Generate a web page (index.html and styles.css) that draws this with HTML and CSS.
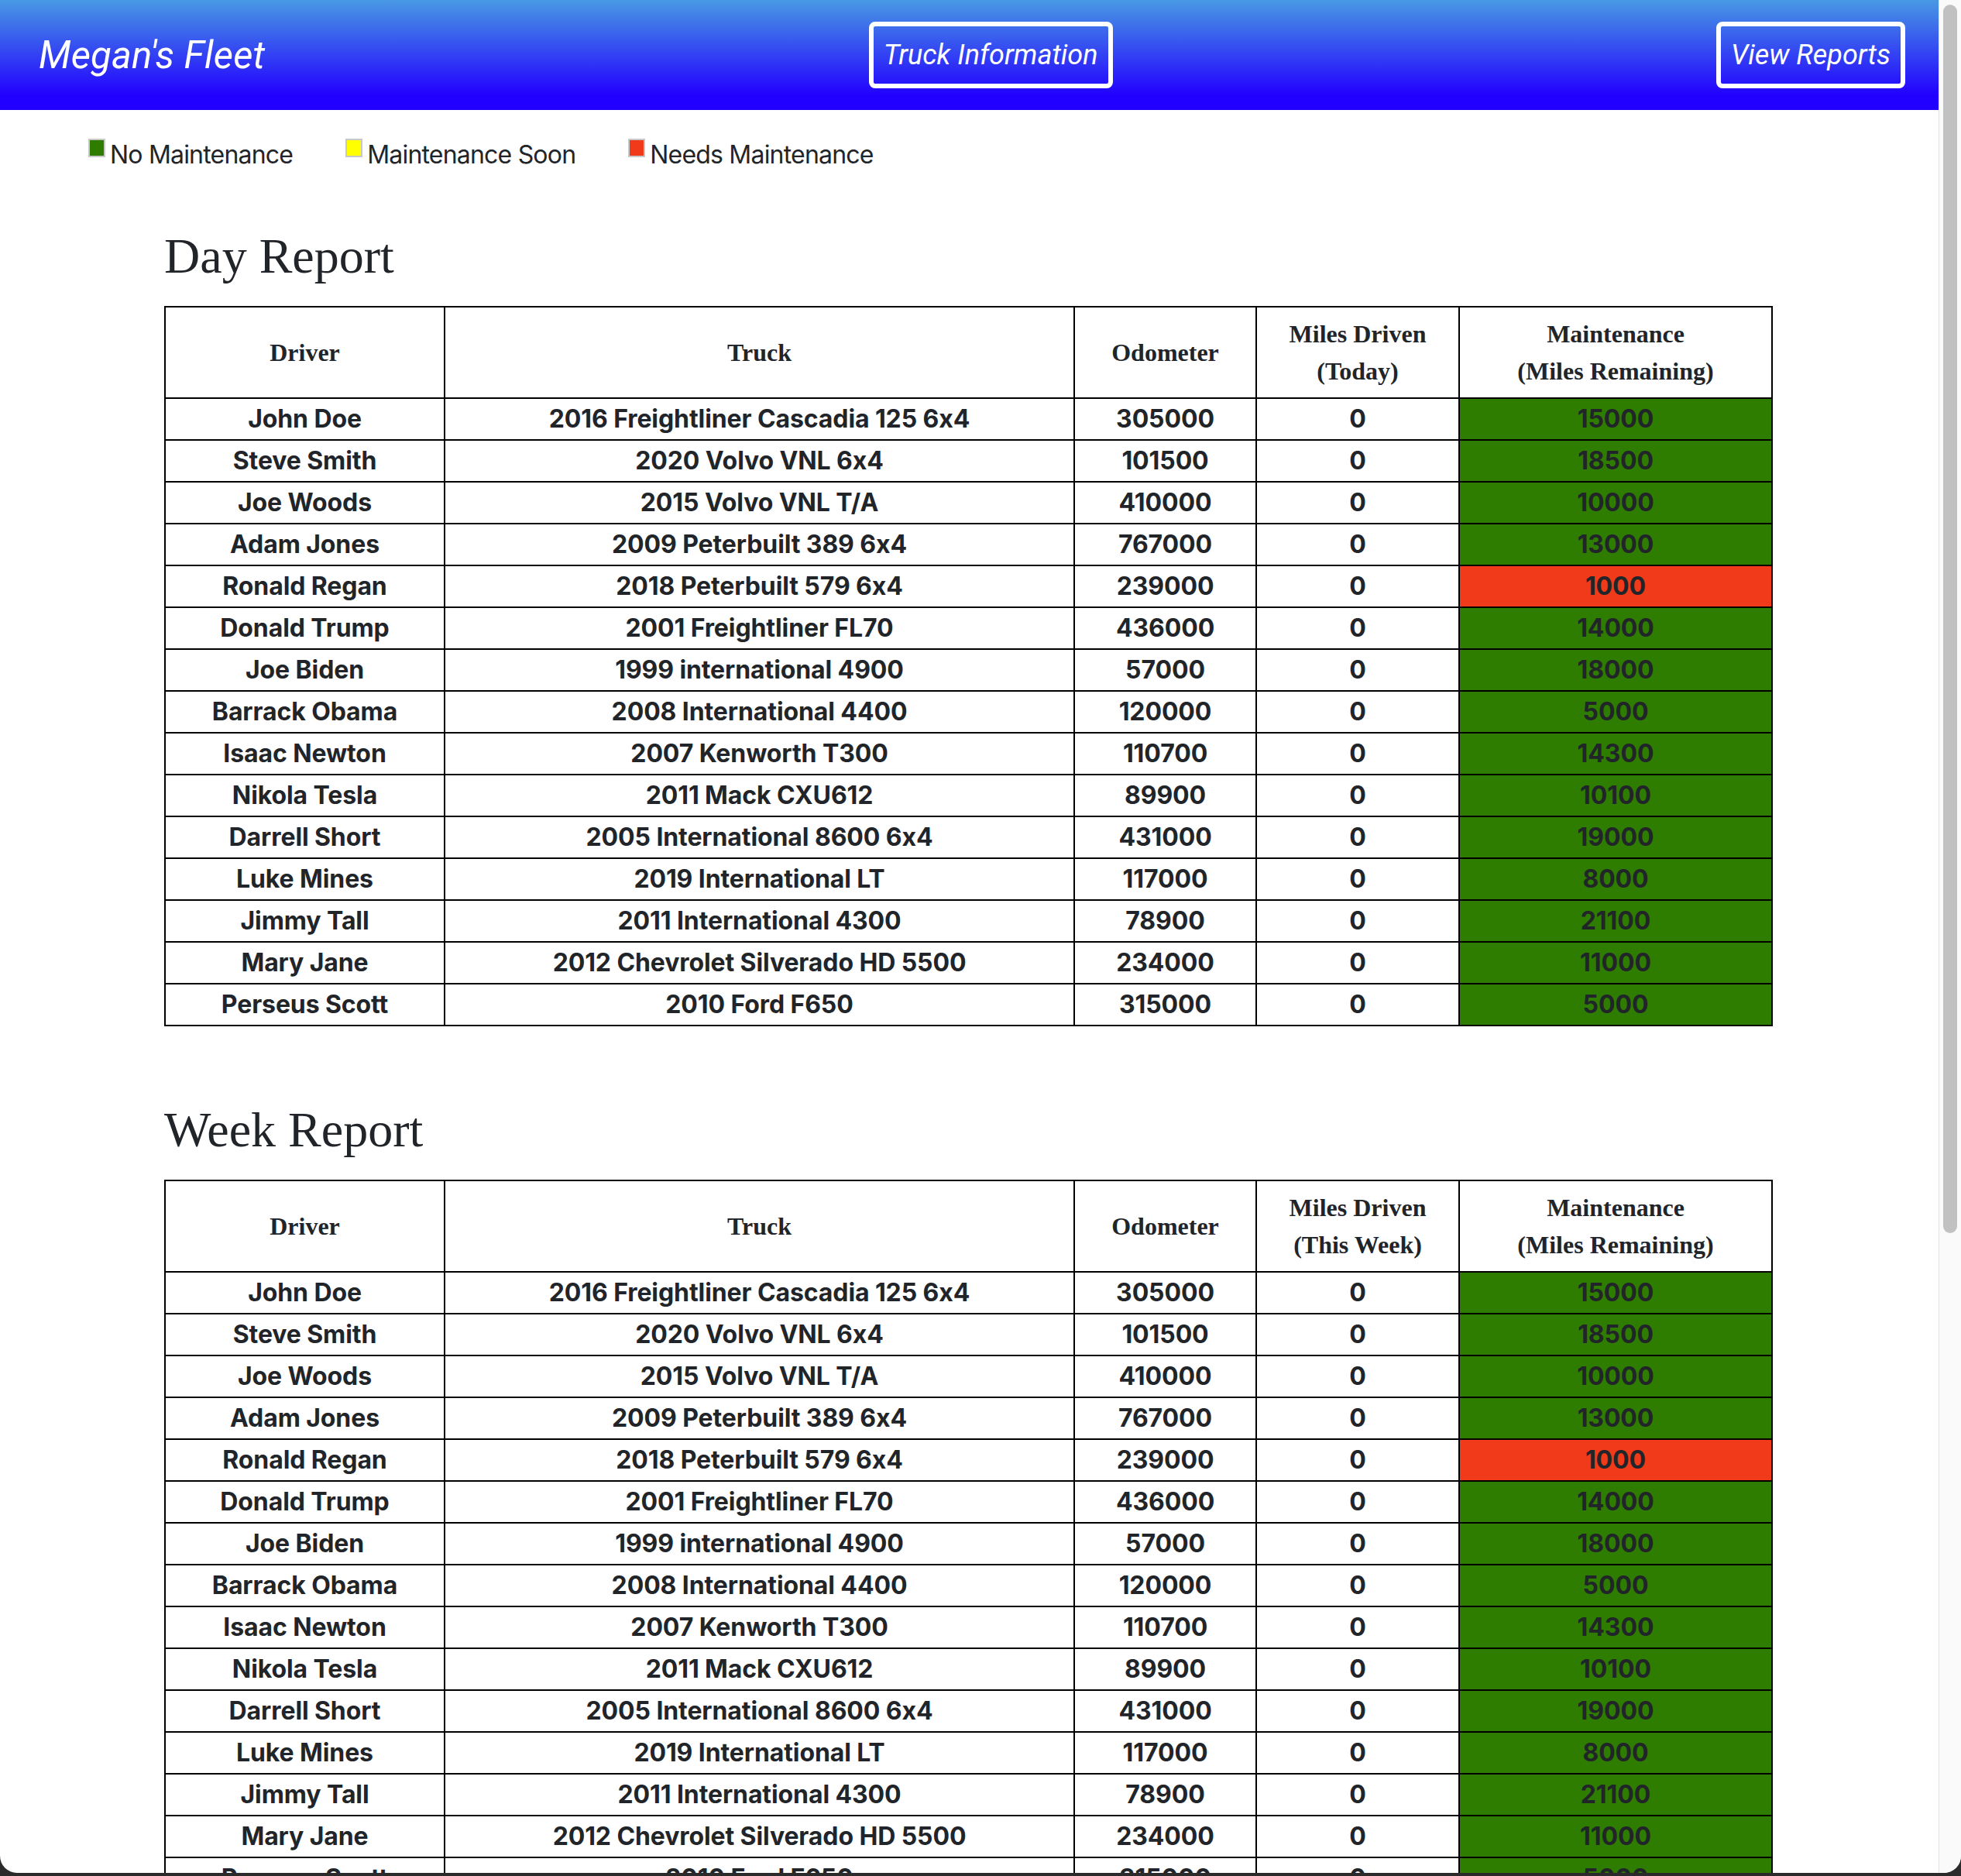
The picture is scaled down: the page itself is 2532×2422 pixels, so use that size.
FILE: index.html
```html
<!DOCTYPE html>
<html lang="en">
<head>
<meta charset="utf-8">
<title>Megan's Fleet</title>
<link rel="stylesheet" href="styles.css">
</head>
<body>
<div class="window">
  <div class="page">
    <nav class="navbar">
      <div class="brand">Megan's Fleet</div>
      <a class="navbtn">Truck Information</a>
      <a class="navbtn">View Reports</a>
    </nav>

    <div class="legend">
      <div class="legend-item"><span class="swatch sw-green"></span>No Maintenance</div>
      <div class="legend-item"><span class="swatch sw-yellow"></span>Maintenance Soon</div>
      <div class="legend-item"><span class="swatch sw-red"></span>Needs Maintenance</div>
    </div>

    <section class="report">
      <h2>Day Report</h2>
      <table>
        <colgroup>
          <col class="c-driver"><col class="c-truck"><col class="c-odo"><col class="c-miles"><col class="c-maint">
        </colgroup>
        <thead>
          <tr><th>Driver</th><th>Truck</th><th>Odometer</th><th>Miles Driven<br>(Today)</th><th>Maintenance<br>(Miles Remaining)</th></tr>
        </thead>
        <tbody>
          <tr><td>John Doe</td><td>2016 Freightliner Cascadia 125 6x4</td><td>305000</td><td>0</td><td class="ok">15000</td></tr>
          <tr><td>Steve Smith</td><td>2020 Volvo VNL 6x4</td><td>101500</td><td>0</td><td class="ok">18500</td></tr>
          <tr><td>Joe Woods</td><td>2015 Volvo VNL T/A</td><td>410000</td><td>0</td><td class="ok">10000</td></tr>
          <tr><td>Adam Jones</td><td>2009 Peterbuilt 389 6x4</td><td>767000</td><td>0</td><td class="ok">13000</td></tr>
          <tr><td>Ronald Regan</td><td>2018 Peterbuilt 579 6x4</td><td>239000</td><td>0</td><td class="bad">1000</td></tr>
          <tr><td>Donald Trump</td><td>2001 Freightliner FL70</td><td>436000</td><td>0</td><td class="ok">14000</td></tr>
          <tr><td>Joe Biden</td><td>1999 international 4900</td><td>57000</td><td>0</td><td class="ok">18000</td></tr>
          <tr><td>Barrack Obama</td><td>2008 International 4400</td><td>120000</td><td>0</td><td class="ok">5000</td></tr>
          <tr><td>Isaac Newton</td><td>2007 Kenworth T300</td><td>110700</td><td>0</td><td class="ok">14300</td></tr>
          <tr><td>Nikola Tesla</td><td>2011 Mack CXU612</td><td>89900</td><td>0</td><td class="ok">10100</td></tr>
          <tr><td>Darrell Short</td><td>2005 International 8600 6x4</td><td>431000</td><td>0</td><td class="ok">19000</td></tr>
          <tr><td>Luke Mines</td><td>2019 International LT</td><td>117000</td><td>0</td><td class="ok">8000</td></tr>
          <tr><td>Jimmy Tall</td><td>2011 International 4300</td><td>78900</td><td>0</td><td class="ok">21100</td></tr>
          <tr><td>Mary Jane</td><td>2012 Chevrolet Silverado HD 5500</td><td>234000</td><td>0</td><td class="ok">11000</td></tr>
          <tr><td>Perseus Scott</td><td>2010 Ford F650</td><td>315000</td><td>0</td><td class="ok">5000</td></tr>
        </tbody>
      </table>
    </section>

    <section class="report">
      <h2>Week Report</h2>
      <table>
        <colgroup>
          <col class="c-driver"><col class="c-truck"><col class="c-odo"><col class="c-miles"><col class="c-maint">
        </colgroup>
        <thead>
          <tr><th>Driver</th><th>Truck</th><th>Odometer</th><th>Miles Driven<br>(This Week)</th><th>Maintenance<br>(Miles Remaining)</th></tr>
        </thead>
        <tbody>
          <tr><td>John Doe</td><td>2016 Freightliner Cascadia 125 6x4</td><td>305000</td><td>0</td><td class="ok">15000</td></tr>
          <tr><td>Steve Smith</td><td>2020 Volvo VNL 6x4</td><td>101500</td><td>0</td><td class="ok">18500</td></tr>
          <tr><td>Joe Woods</td><td>2015 Volvo VNL T/A</td><td>410000</td><td>0</td><td class="ok">10000</td></tr>
          <tr><td>Adam Jones</td><td>2009 Peterbuilt 389 6x4</td><td>767000</td><td>0</td><td class="ok">13000</td></tr>
          <tr><td>Ronald Regan</td><td>2018 Peterbuilt 579 6x4</td><td>239000</td><td>0</td><td class="bad">1000</td></tr>
          <tr><td>Donald Trump</td><td>2001 Freightliner FL70</td><td>436000</td><td>0</td><td class="ok">14000</td></tr>
          <tr><td>Joe Biden</td><td>1999 international 4900</td><td>57000</td><td>0</td><td class="ok">18000</td></tr>
          <tr><td>Barrack Obama</td><td>2008 International 4400</td><td>120000</td><td>0</td><td class="ok">5000</td></tr>
          <tr><td>Isaac Newton</td><td>2007 Kenworth T300</td><td>110700</td><td>0</td><td class="ok">14300</td></tr>
          <tr><td>Nikola Tesla</td><td>2011 Mack CXU612</td><td>89900</td><td>0</td><td class="ok">10100</td></tr>
          <tr><td>Darrell Short</td><td>2005 International 8600 6x4</td><td>431000</td><td>0</td><td class="ok">19000</td></tr>
          <tr><td>Luke Mines</td><td>2019 International LT</td><td>117000</td><td>0</td><td class="ok">8000</td></tr>
          <tr><td>Jimmy Tall</td><td>2011 International 4300</td><td>78900</td><td>0</td><td class="ok">21100</td></tr>
          <tr><td>Mary Jane</td><td>2012 Chevrolet Silverado HD 5500</td><td>234000</td><td>0</td><td class="ok">11000</td></tr>
          <tr><td>Perseus Scott</td><td>2010 Ford F650</td><td>315000</td><td>0</td><td class="ok">5000</td></tr>
        </tbody>
      </table>
    </section>
  </div>
  <div class="scrollbar"><div class="thumb"></div></div>
</div>
</body>
</html>
```

FILE: styles.css
```css
html, body {
  margin: 0;
  padding: 0;
  height: 2422px;
  overflow: hidden;
  background: #2b2b2b;
}

.window {
  display: flex;
  height: 2418px;
  background: #ffffff;
  border-radius: 0 0 22px 22px;
  overflow: hidden;
}

.page {
  flex: 1;
  min-width: 0;
  overflow: hidden;
}

.scrollbar {
  width: 29px;
  flex: none;
  box-sizing: border-box;
  background: #fafafa;
  border-left: 1px solid #e4e4e4;
  padding: 6px 0 0 5px;
}

.thumb {
  width: 18px;
  height: 1586px;
  border-radius: 9px;
  background: #c1c1c1;
}

/* Navbar */
.navbar {
  height: 142px;
  box-sizing: border-box;
  display: flex;
  align-items: center;
  justify-content: space-between;
  padding: 0 43px 0 50px;
  background: linear-gradient(to bottom, #4899e3 0%, #2200ff 87%, #2200ff 100%);
}

.brand {
  font-family: Roboto, "Liberation Sans", sans-serif;
  font-style: italic;
  font-size: 49px;
  line-height: 1.2;
  color: #ffffff;
  letter-spacing: 0.2px;
  padding-top: 3px;
}

.navbtn {
  display: block;
  border: 6px solid #ffffff;
  border-radius: 8px;
  padding: 10px 13px;
  font-family: Roboto, "Liberation Sans", sans-serif;
  font-style: italic;
  font-size: 36px;
  line-height: 54px;
  color: #ffffff;
  letter-spacing: 0;
}

/* Legend */
.legend {
  display: flex;
  gap: 68px;
  margin-top: 34px;
  padding-left: 114px;
  font-family: Inter, "Liberation Sans", sans-serif;
  font-size: 32px;
  line-height: 48px;
  color: #212529;
  letter-spacing: -0.8px;
  font-feature-settings: "calt" 0;
}

.swatch {
  display: inline-block;
  width: 18px;
  height: 20px;
  border: 2px solid #c8c8c8;
  vertical-align: 8px;
  margin-right: 6px;
}

.sw-green { background: #2e7d00; }
.sw-yellow { background: #ffff00; }
.sw-red { background: #f03a1a; }

/* Reports */
.report {
  margin-left: 212px;
  width: 2075px;
}

.report h2 {
  margin: 69px 0 25px;
  font-family: "Liberation Serif", "Times New Roman", serif;
  font-weight: normal;
  font-size: 64px;
  line-height: 1.2;
  color: #212529;
}

.report + .report h2 {
  margin-top: 96px;
}

table {
  border-collapse: collapse;
  table-layout: fixed;
  width: 2075px;
}

.c-driver { width: 361px; }
.c-truck { width: 813px; }
.c-odo { width: 235px; }
.c-miles { width: 262px; }
.c-maint { width: 404px; }

th, td {
  border: 2px solid #000000;
  text-align: center;
  color: #212529;
}

th {
  font-family: "Liberation Serif", "Times New Roman", serif;
  font-weight: bold;
  font-size: 32px;
  line-height: 48px;
  padding: 10px 8px 10px;
}

td {
  font-family: Inter, "Liberation Sans", sans-serif;
  font-weight: bold;
  font-size: 32px;
  line-height: 52px;
  padding: 0 8px;
  letter-spacing: -0.1px;
  font-feature-settings: "calt" 0;
  font-variant-ligatures: none;
}

td.ok { background: #2e7d00; }
td.bad { background: #f03a1a; }
```
